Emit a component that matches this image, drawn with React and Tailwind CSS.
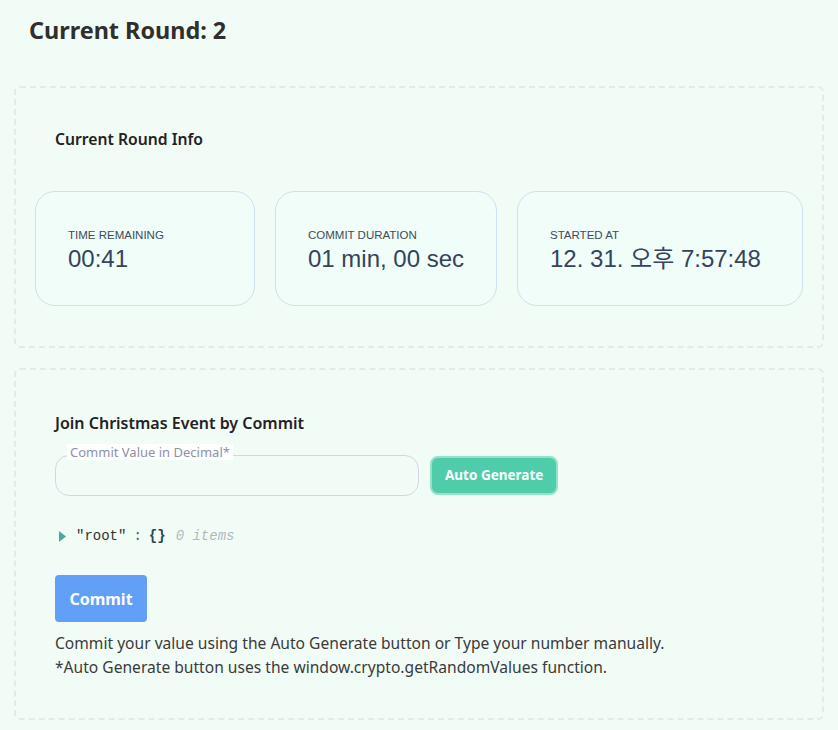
export default function App() {
  const stats = [
    { label: 'TIME REMAINING', value: '00:41' },
    { label: 'COMMIT DURATION', value: '01 min, 00 sec' },
    { label: 'STARTED AT', value: '12. 31. 오후 7:57:48' },
  ]

  return (
    <div
      className="min-h-screen bg-[#f2fcf6] text-[#333] px-[14px] pt-[14px] pb-2"
      style={{ fontFamily: '"Noto Sans", "Noto Sans CJK KR", sans-serif' }}
    >
      {/* Title */}
      <h1 className="ml-[15px] text-[23.4px] leading-[32px] font-bold text-[#2f2f2f]">Current Round: 2</h1>

      {/* Round info */}
      <section className="mt-[40px] border-2 border-dashed border-[#e3e9ec] rounded-md px-[19px] pt-[20px] pb-[40px]">
        <h2 className="px-5 pt-[20px] pb-[41px] text-[15.7px] leading-[22px] font-semibold text-[#222]">
          Current Round Info
        </h2>
        <div className="grid grid-cols-[220px_222px_1fr] gap-5">
          {stats.map((s) => (
            <div
              key={s.label}
              className="h-[115px] rounded-[20px] border border-[#cfe0ee] bg-[#f0fdf8] px-8 pt-[35px] whitespace-nowrap"
              style={{ fontFamily: '"Liberation Sans", "Noto Sans CJK KR", sans-serif' }}
            >
              <p className="text-[11.5px] leading-[16px] text-[#3d4b5e]">{s.label}</p>
              <p className="text-[24px] leading-[32px] text-[#34445a]">{s.value}</p>
            </div>
          ))}
        </div>
      </section>

      {/* Commit form */}
      <section className="mt-[20px] border-2 border-dashed border-[#e3e9ec] rounded-md px-[39px] pt-[42px] pb-[39px]">
        <h2 className="text-[16px] leading-[22px] font-semibold text-[#222]">Join Christmas Event by Commit</h2>

        <div className="mt-[21px] flex items-center gap-[11px]">
          <div className="relative w-[364px]">
            <span className="absolute left-[12px] -top-[11px] bg-white px-[3px] text-[13px] leading-[16px] text-[#8d90a8]">
              Commit Value in Decimal*
            </span>
            <input
              type="text"
              className="w-full h-[41px] rounded-[14px] border border-[#d2d7e6] bg-[#f2fcf6] px-3 outline-none"
            />
          </div>
          <button className="h-[39px] px-[13px] rounded-lg border-2 border-[#93e2c9] bg-[#4fcca9] text-white text-[13.5px] font-bold">
            Auto Generate
          </button>
        </div>

        {/* json viewer */}
        <div
          className="mt-[30px] flex items-center text-[14px] leading-[20px] ml-[4px]"
          style={{ fontFamily: '"Liberation Mono", monospace' }}
        >
          <svg width="7" height="11" viewBox="0 0 7 11" className="mr-[10px]">
            <path d="M0 0 L7 5.5 L0 11 Z" fill="#4aa8a0" />
          </svg>
          <span className="text-[#333]">"root"</span>
          <span className="text-[#555] mx-[7px]">:</span>
          <span className="font-bold text-[#2b4756]">{'{}'}</span>
          <span className="ml-[10px] italic text-[#b3b8bd]">0 items</span>
        </div>

        <button className="mt-[29px] w-[92px] h-[47px] rounded bg-[#62a0f8] text-white text-[16px] font-bold">
          Commit
        </button>

        <div className="mt-[9px] text-[15.6px] leading-[24px] text-[#3a3a3a]">
          <p>Commit your value using the Auto Generate button or Type your number manually.</p>
          <p>*Auto Generate button uses the window.crypto.getRandomValues function.</p>
        </div>
      </section>
    </div>
  )
}
